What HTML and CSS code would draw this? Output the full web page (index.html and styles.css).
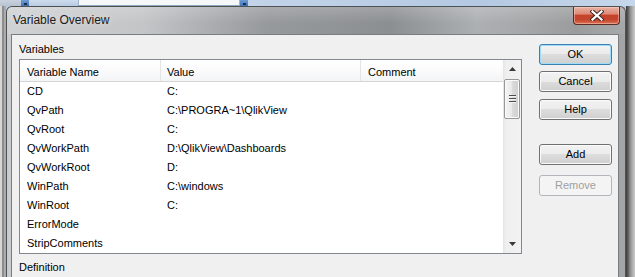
FILE: index.html
```html
<!DOCTYPE html>
<html>
<head>
<meta charset="utf-8">
<link rel="stylesheet" href="styles.css">
</head>
<body>
<div class="screen">
  <div class="topbar">
    <div class="tb-a"></div>
    <div class="tb-btn"><span class="tb-arrow"></span></div>
    <div class="tb-b"></div>
    <div class="tb-field"></div>
    <div class="tb-btn"><span class="tb-arrow"></span></div>
    <div class="tb-c"></div>
  </div>
  <div class="stage">
    <div class="edge-left"></div>
    <div class="window">
      <div class="titlebar">
        <span class="title">Variable Overview</span>
        <div class="close">
          <svg width="14" height="11" viewBox="0 0 14 11">
            <path d="M2.5 1.5 L11.5 9.5 M11.5 1.5 L2.5 9.5" stroke="#3b2522" stroke-width="4.2" stroke-linecap="square" fill="none"/>
            <path d="M2.5 1.5 L11.5 9.5 M11.5 1.5 L2.5 9.5" stroke="#ffffff" stroke-width="2.3" stroke-linecap="square" fill="none"/>
          </svg>
        </div>
      </div>
      <div class="frame">
        <div class="content">
          <div class="main">
            <div class="label">Variables</div>
            <div class="list">
              <div class="grid">
                <div class="head">
                  <div class="hc c1">Variable Name</div>
                  <div class="hc c2">Value</div>
                  <div class="hc c3">Comment</div>
                </div>
                <div class="row"><div class="cell c1">CD</div><div class="cell c2">C:</div><div class="cell c3"></div></div>
                <div class="row"><div class="cell c1">QvPath</div><div class="cell c2">C:\PROGRA~1\QlikView</div><div class="cell c3"></div></div>
                <div class="row"><div class="cell c1">QvRoot</div><div class="cell c2">C:</div><div class="cell c3"></div></div>
                <div class="row"><div class="cell c1">QvWorkPath</div><div class="cell c2">D:\QlikView\Dashboards</div><div class="cell c3"></div></div>
                <div class="row"><div class="cell c1">QvWorkRoot</div><div class="cell c2">D:</div><div class="cell c3"></div></div>
                <div class="row"><div class="cell c1">WinPath</div><div class="cell c2">C:\windows</div><div class="cell c3"></div></div>
                <div class="row"><div class="cell c1">WinRoot</div><div class="cell c2">C:</div><div class="cell c3"></div></div>
                <div class="row"><div class="cell c1">ErrorMode</div><div class="cell c2"></div><div class="cell c3"></div></div>
                <div class="row"><div class="cell c1">StripComments</div><div class="cell c2"></div><div class="cell c3"></div></div>
              </div>
              <div class="vscroll">
                <div class="arrow">
                  <svg width="7" height="4" viewBox="0 0 7 4"><path d="M0 4 L3.5 0 L7 4 Z" fill="#3a3a3a"/></svg>
                </div>
                <div class="thumb">
                  <span class="grip"></span><span class="grip"></span><span class="grip"></span>
                </div>
                <div class="track"></div>
                <div class="arrow">
                  <svg width="7" height="4" viewBox="0 0 7 4"><path d="M0 0 L7 0 L3.5 4 Z" fill="#3a3a3a"/></svg>
                </div>
              </div>
            </div>
            <div class="label def">Definition</div>
          </div>
          <div class="buttons">
            <div class="btn default">OK</div>
            <div class="btn b-cancel">Cancel</div>
            <div class="btn b-help">Help</div>
            <div class="btn b-add">Add</div>
            <div class="btn b-remove disabled">Remove</div>
          </div>
        </div>
      </div>
    </div>
    <div class="edge-right"></div>
  </div>
</div>
</body>
</html>
```
FILE: styles.css
```css
* { box-sizing: border-box; }
html, body { margin: 0; padding: 0; }
body {
  width: 635px;
  height: 277px;
  overflow: hidden;
  font-family: "Liberation Sans", Arial, sans-serif;
  font-size: 11px;
  color: #000;
  background: #b9cde4;
}
.screen {
  width: 635px;
  height: 277px;
  display: flex;
  flex-direction: column;
}

/* top strip (window behind) */
.topbar {
  height: 6px;
  display: flex;
  flex: none;
  background: #bfd2e8;
}
.tb-a { width: 21px; background: linear-gradient(#c9d3de, #b7c3d0); }
.tb-btn {
  width: 8px;
  background: linear-gradient(#6d9bd3, #3f73b8);
  display: flex;
  justify-content: center;
  align-items: flex-end;
}
.tb-arrow { width: 3px; height: 2px; background: #1c2f4a; margin-bottom: 1px; }
.tb-b { width: 49px; background: linear-gradient(#cfdcec, #b8cbe2); }
.tb-field {
  width: 162px;
  background: #f5f7f9;
  border-bottom: 1px solid #8ea4bf;
  border-left: 1px solid #9fb3ca;
  border-right: 1px solid #9fb3ca;
}
.tb-c { flex: 1; background: linear-gradient(90deg, #c3d4e9, #b4c9e2 60%, #c6d7eb); }

.stage {
  flex: 1;
  display: flex;
}
.edge-left {
  width: 6px;
  flex: none;
  background: linear-gradient(90deg, #d6d6d6 0 2px, #8d8d8d 2px 4px, #ababab 4px 6px);
}
.edge-right {
  flex: 1;
  background: linear-gradient(90deg, #3e3e3e 0, #5a5a5a 2px, #8c8c8c 4px, #b4b4b4 7px, #cacaca 9px);
}

/* window */
.window {
  width: 620px;
  flex: none;
  display: flex;
  flex-direction: column;
  border: 1px solid #4f5254;
  border-bottom: none;
  border-radius: 6px 6px 0 0;
  background: linear-gradient(90deg, #cfd1d3 0, #c3c5c7 22%, #979a9d 42%, #8c8f92 62%, #adb0b2 76%, #a5a7a9 84%, #9a9c9e 92%, #a6a8aa 100%);
  overflow: hidden;
}
.titlebar {
  height: 27px;
  flex: none;
  display: flex;
  justify-content: space-between;
  align-items: flex-start;
  padding-left: 6px;
  background: linear-gradient(rgba(255,255,255,0.18), rgba(255,255,255,0) 60%);
}
.title {
  font-family: "Liberation Sans", Arial, sans-serif;
  font-size: 12px;
  line-height: 27px;
  color: #1b1b1b;
  text-shadow: 0 0 6px rgba(255,255,255,0.6);
}
.close {
  width: 47px;
  height: 18px;
  margin-right: 5px;
  border: 1px solid #5b2c25;
  border-top: none;
  border-radius: 0 0 4px 4px;
  background: linear-gradient(#eab2a4 0, #dc8b77 40%, #c6432b 50%, #c4452d 75%, #dc7152 100%);
  box-shadow: inset 0 0 0 1px rgba(255,220,210,0.45);
  display: flex;
  justify-content: center;
  align-items: center;
}

.frame {
  flex: 1;
  display: flex;
  padding: 0 6px 0 4px;
  background: linear-gradient(90deg, #c9cbcd 0, #c9cbcd 4px, #a2a4a6 4px);
}
.content {
  width: 608px;
  display: flex;
  align-items: flex-start;
  padding-left: 7px;
  padding-right: 6px;
  background: #f0f0f0;
  border: 1px solid #7a7c7e;
  border-bottom: none;
}
.main {
  width: 503px;
  flex: none;
  display: flex;
  flex-direction: column;
}
.label {
  line-height: 13px;
  padding-top: 8px;
  margin-bottom: 3px;
}
.label.def {
  padding-top: 7px;
  margin-bottom: 0;
}

/* list view */
.list {
  height: 195px;
  display: flex;
  border: 1px solid #828790;
  background: #fff;
}
.grid {
  width: 483px;
  flex: none;
  display: flex;
  flex-direction: column;
}
.head {
  height: 22px;
  display: flex;
  border-bottom: 1px solid #d5d5d5;
  background: linear-gradient(#ffffff 0, #fbfbfc 50%, #f3f4f5 100%);
}
.hc {
  padding-top: 3px;
  line-height: 18px;
  border-right: 1px solid #e3e4e6;
}
.hc.c3 { border-right: none; }
.c1 { width: 141px; padding-left: 7px; }
.c2 { width: 200px; padding-left: 6px; }
.c3 { flex: 1; padding-left: 7px; }
.row {
  height: 19px;
  display: flex;
}
.cell { line-height: 19px; white-space: nowrap; }

.vscroll {
  width: 18px;
  flex: none;
  display: flex;
  flex-direction: column;
  align-items: center;
  background: linear-gradient(90deg, #e4e4e4 0, #efefef 3px, #f2f2f2 100%);
}
.arrow {
  width: 17px;
  height: 18px;
  flex: none;
  display: flex;
  justify-content: center;
  align-items: center;
}
.thumb {
  width: 16px;
  height: 40px;
  flex: none;
  margin-top: 1px;
  border: 1px solid #979797;
  border-radius: 2px;
  background: linear-gradient(90deg, #f4f4f4 0, #eaeaea 45%, #dadada 55%, #cfcfcf 100%);
  box-shadow: inset 0 0 0 1px #fafafa;
  display: flex;
  flex-direction: column;
  justify-content: center;
  align-items: center;
  gap: 1px;
}
.grip {
  width: 7px;
  height: 2px;
  border-top: 1px solid #4d4d4d;
  border-bottom: 1px solid #f4f4f4;
}
.track { flex: 1; }

/* buttons */
.buttons {
  width: 73px;
  flex: none;
  margin-left: 17px;
  padding-top: 9px;
  display: flex;
  flex-direction: column;
}
.btn {
  height: 21px;
  line-height: 19px;
  text-align: center;
  border: 1px solid #707070;
  border-radius: 3px;
  background: linear-gradient(#f2f2f2 0, #ebebeb 50%, #dddddd 50%, #cfcfcf 100%);
  box-shadow: inset 0 0 0 1px #fbfbfb;
}
.btn.default {
  border-color: #3c7fb1;
  box-shadow: inset 0 0 0 1px #9fdcf7;
}
.b-cancel { margin-top: 6px; }
.b-help { margin-top: 7px; }
.b-add { margin-top: 24px; }
.b-remove { margin-top: 10px; }
.btn.disabled {
  color: #a0a0a0;
  border-color: #b2b6ba;
  background: #f4f4f4;
  box-shadow: none;
}
```
